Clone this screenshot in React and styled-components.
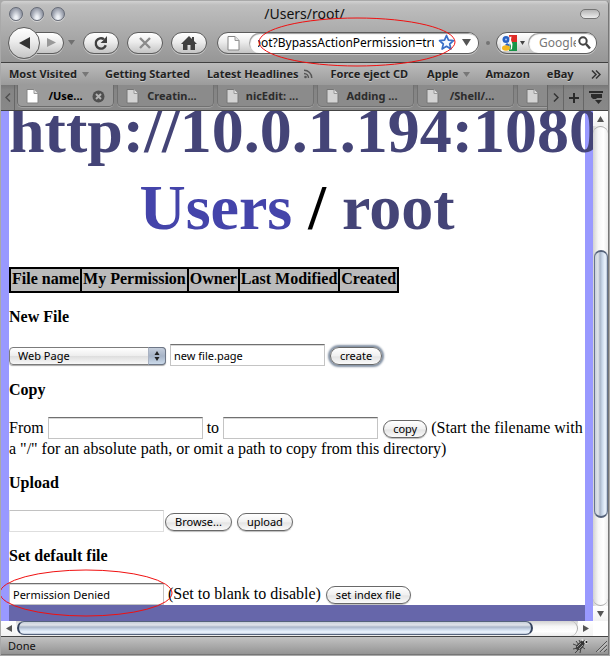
import React from "react";
import styled, { createGlobalStyle, css } from "styled-components";

const sans = `"Noto Sans", "Open Sans", sans-serif`;
const serif = `"Liberation Serif", "Times New Roman", serif`;

const GlobalStyle = createGlobalStyle`
  * { box-sizing: border-box; }
  body { margin: 0; background: #a9a9a9; font-family: ${serif}; }
  button, input, select { font-family: ${sans}; margin: 0; }
`;

const Window = styled.div`
  display: flex;
  flex-direction: column;
  min-height: calc(100vh - 2px);
  margin: 1px 1px 1px 1px;
  overflow: hidden;
  border-radius: 4px 4px 0 0;
  border-right: 1px solid #777;
  background: #b4b4b4;
`;

const Chrome = styled.header`
  background: linear-gradient(#d2d2d2, #bebebe 4px, #969696);
  border-bottom: 1px solid #404040;
`;

const TitleBar = styled.div`
  display: grid;
  grid-template-columns: 1fr auto 1fr;
  align-items: center;
  height: 25px;
  padding: 0 8px;
`;

const Lights = styled.div`
  display: flex;
  gap: 7px;
`;

const Light = styled.button`
  width: 14px;
  height: 14px;
  padding: 0;
  border: 1px solid #656a76;
  border-radius: 50%;
  background: radial-gradient(ellipse at 50% 85%, #eef1f6 15%, #a4a9b5 60%, #747a88);
  box-shadow: 0 1px 0 #d5d5d5;
`;

const Title = styled.h1`
  margin: 0;
  font: 14px/20px ${sans};
  color: #111;
`;

const ToolbarPill = styled.button`
  justify-self: end;
  width: 20px;
  height: 10px;
  padding: 0;
  border: 1px solid #747474;
  border-radius: 5px;
  background: linear-gradient(#b5b5b5, #ededed);
`;

const Toolbar = styled.div`
  display: flex;
  align-items: center;
  height: 36px;
  padding: 0 11px 3px 7px;
`;

const glossy = css`
  border: 1px solid #5c5c5c;
  background: linear-gradient(#fff, #ececec 45%, #c4c4c4);
  box-shadow: 0 1px 0 #c6c6c6;
`;

const BackButton = styled.button`
  ${glossy}
  position: relative;
  z-index: 1;
  flex: none;
  display: grid;
  place-items: center;
  width: 32px;
  height: 32px;
  padding: 0;
  border-radius: 50%;
`;

const ForwardButton = styled.button`
  ${glossy}
  flex: none;
  display: grid;
  place-items: center end;
  width: 30px;
  height: 22px;
  margin-left: -6px;
  padding: 0 7px 0 0;
  border-radius: 0 11px 11px 0;
`;

const PlainButton = styled.button`
  flex: none;
  display: grid;
  place-items: center;
  width: ${(p) => p.$width || 12}px;
  height: 20px;
  padding: 0;
  border: 0;
  background: none;
`;

const NavButton = styled.button`
  ${glossy}
  flex: none;
  display: grid;
  place-items: center;
  width: 36px;
  height: 22px;
  margin-left: 8px;
  padding: 0;
  border-radius: 11px;
`;

const HistoryArrow = styled(PlainButton)`
  margin: 0 -2px 0 1px;
`;

const Pill = styled.div`
  ${glossy}
  position: relative;
  display: flex;
  flex: ${(p) => p.$flex};
  align-items: center;
  min-width: 0;
  height: 22px;
  margin-left: ${(p) => p.$gap}px;
  border-radius: 11px;
`;

const Field = styled.div`
  display: flex;
  flex: 1;
  align-items: center;
  min-width: 0;
  height: 20px;
  padding: 0 4px 0 ${(p) => p.$inset}px;
  border-radius: 10px;
  background: #fff;
  box-shadow: inset 1px 1px 1px #999;
`;

const FieldInput = styled.input`
  flex: 1;
  min-width: 0;
  width: 0;
  height: 18px;
  padding: 0;
  border: 0;
  outline: 0;
  background: none;
  font-size: 12px;
  color: #000;
  text-indent: ${(p) => p.$shift || 0}px;
  &::placeholder { color: #777; opacity: 1; }
`;

const PillIcon = styled.span`
  display: flex;
  align-items: center;
  justify-content: center;
  gap: 3px;
  width: 31px;
`;

const Dot = styled.span`
  width: 4px;
  height: 4px;
  margin-left: 7px;
  border-radius: 50%;
  background: #747474;
`;

const UrlMark = styled.svg`
  position: absolute;
  left: 39px;
  top: -16px;
  width: 200px;
  height: 50px;
  pointer-events: none;
  overflow: visible;
`;

const Bookmarks = styled.nav`
  display: flex;
  align-items: center;
  height: 22px;
  padding: 0 6px 0 8px;
  background: linear-gradient(#bcbcbc, #9b9b9b);
`;

const Bookmark = styled.a`
  display: flex;
  align-items: center;
  gap: 5px;
  margin-right: ${(p) => p.$gap}px;
  font: bold 11px/20px ${sans};
  white-space: nowrap;
  color: #222;
  text-decoration: none;
  text-shadow: 0 1px 0 #c8c8c8;
`;

const More = styled(PlainButton)`
  margin-left: auto;
`;

const TabBar = styled.div`
  display: flex;
  height: 26px;
  background: linear-gradient(#777, #858585 5px, #888);
  border-bottom: 1px solid #444;
`;

const TabStrip = styled.div`
  display: flex;
  flex: 1;
  gap: 3px;
  min-width: 0;
  padding-left: 2px;
  overflow: hidden;
`;

const Tab = styled.button`
  flex: none;
  display: flex;
  align-items: center;
  width: 97px;
  height: 22px;
  padding: 1px 8px 0;
  border: 1px solid ${(p) => (p.$active ? "#6c6c6c" : "#717171")};
  border-top: 0;
  border-radius: 0 0 5px 5px;
  background: ${(p) => (p.$active ? "#9b9b9b" : "#8b8b8b")};
  box-shadow: 0 1px 0 #a2a2a2;
  font: bold 11px/18px ${sans};
  color: ${(p) => (p.$active ? "#000" : "#2c2c2c")};
`;

const TabLabel = styled.span`
  flex: 1;
  text-align: center;
  white-space: nowrap;
`;

const TabTool = styled.button`
  flex: none;
  display: grid;
  place-items: center;
  width: ${(p) => p.$width}px;
  padding: 0;
  border: 0;
  border-left: ${(p) => (p.$line === "left" ? "1px solid #666" : "0")};
  border-right: ${(p) => (p.$line === "right" ? "1px solid #666" : "0")};
  background: none;
`;

const Viewport = styled.div`
  display: grid;
  grid-template-columns: minmax(0, 1fr) 15px;
  grid-template-rows: 1fr 15px;
  flex: 1;
  background: #fff;
`;

const Page = styled.main`
  display: flex;
  flex-direction: column;
  min-width: 0;
  border: solid #99f;
  border-width: 0 8px;
  overflow: clip;
  overflow-clip-margin: border-box;
  background: #fff;
  color: #000;
  font-size: 16px;
  line-height: 19px;
`;

const PathHeading = styled.h2`
  margin: -19px 0 21px;
  font-size: 64px;
  line-height: 77px;
  text-align: center;
`;

const HostLine = styled.span`
  display: block;
  text-align: left;
  white-space: nowrap;
`;

const PathLink = styled.a`
  color: ${(p) => (p.$fresh ? "#44a" : "#447")};
  text-decoration: none;
`;

const Files = styled.table`
  align-self: flex-start;
  border: 1px solid #000;
  border-collapse: collapse;
  background: #bbb;
`;

const Th = styled.th`
  height: 24px;
  padding: 0 1px 2px;
  border: 2px solid #000;
  line-height: 20px;
  white-space: nowrap;
`;

const SectionTitle = styled.h3`
  margin: 15px 0 18px;
  font-size: 16px;
  line-height: 18px;
`;

const Row = styled.form`
  display: block;
  min-height: 22px;
`;

const WrappedRow = styled(Row)`
  padding-bottom: 1px;
`;

const TextInput = styled.input`
  width: 155px;
  height: 22px;
  padding: 0 3px;
  border: 1px solid ${(p) => (p.$faint ? "#dedede" : "#c4c4c4")};
  border-top-color: ${(p) => (p.$faint ? "#c2c2c2" : "#707070")};
  outline: 0;
  border-radius: 0;
  background: #fff;
  box-shadow: ${(p) => (p.$faint ? "none" : "inset 0 1px 0 #d8d8d8")};
  font-size: 11px;
  line-height: 18px;
  color: #000;
`;

const FormButton = styled.button`
  height: 18px;
  margin-left: 1px;
  padding: 0 9px;
  border: 1px solid #686868;
  border-radius: 9px;
  background: linear-gradient(#fff, #f0f0f0 50%, #e4e4e4 55%, #fafafa);
  box-shadow: ${(p) => (p.$focus ? "0 0 2px 2px #8492a4" : "0 1px 1px #bbb")};
  font-size: 11px;
  line-height: 14px;
  color: #000;
`;

const SelectBox = styled.span`
  position: relative;
  display: inline-flex;
  width: 157px;
  height: 18px;
`;

const Select = styled.select`
  appearance: none;
  width: 100%;
  height: 18px;
  padding: 0 22px 0 8px;
  border: 1px solid #7b7b7b;
  border-radius: 4px;
  background: linear-gradient(#fff, #eee 48%, #dedede 52%, #f8f8f8);
  box-shadow: 0 1px 1px #aaa;
  font-size: 11px;
  line-height: 16px;
  color: #000;
`;

const SelectArrows = styled.svg`
  position: absolute;
  top: 0;
  right: 0;
  width: 18px;
  height: 18px;
  border-radius: 0 4px 4px 0;
  border: 1px solid #6d7686;
  border-left-color: #a9b2c2;
  background: linear-gradient(#c5cedc, #a6b3c6 50%, #cbdaea);
  pointer-events: none;
`;

const Marked = styled.span`
  position: relative;
`;

const InputMark = styled.svg`
  position: absolute;
  left: -9px;
  bottom: -15px;
  width: 173px;
  height: 48px;
  pointer-events: none;
`;

const Footer = styled.footer`
  height: 16px;
  margin-top: auto;
  background: #66a;
`;

const VBar = styled.div`
  display: flex;
  flex-direction: column;
  background: linear-gradient(90deg, #d2d2d2, #f6f6f6 35%, #fff 70%, #ececec);
`;

const HBar = styled.div`
  display: flex;
  background: linear-gradient(#d2d2d2, #f6f6f6 35%, #fff 70%, #ececec);
`;

const Arrow = styled.button`
  flex: none;
  display: grid;
  place-items: center;
  width: 15px;
  height: 15px;
  padding: 0;
  border: 0;
  background: linear-gradient(#fff, #f2f2f2);
`;

const VTrack = styled.div`
  flex: 1;
  display: flex;
  flex-direction: column;
  border: solid #aaa;
  border-width: 1px 0;
  border-radius: 8px;
`;

const HTrack = styled.div`
  flex: 1;
  display: flex;
  border-right: 1px solid #aaa;
  border-radius: 8px;
`;

const VThumb = styled.div`
  flex: none;
  width: 14px;
  height: 56%;
  margin: auto auto 87px;
  border: 1px solid #66748c;
  border-top: 2px solid #55627a;
  border-bottom: 2px solid #55627a;
  border-radius: 7px;
  background: linear-gradient(90deg, #c6ced9, #e0e4ea 25%, #a9b5c8 42%, #c8d6e8 60%, #edf5ff 85%, #b8c4d5);
`;

const HThumb = styled.div`
  width: 92%;
  height: 14px;
  margin-left: 1px;
  border: 1px solid #55637c;
  border-left: 2px solid #35435e;
  border-right: 2px solid #35435e;
  border-radius: 7px;
  background: linear-gradient(#c6ced9, #e0e4ea 25%, #a9b5c8 42%, #c8d6e8 60%, #edf5ff 85%, #b8c4d5);
`;

const StatusBar = styled.div`
  display: flex;
  align-items: center;
  height: 19px;
  padding: 0 1px 0 7px;
  border-top: 1px solid #444;
  border-bottom: 1px solid #777;
  background: linear-gradient(#c2c2c2, #949494);
  font: 11px/16px ${sans};
  color: #111;
`;

const StatusText = styled.span`
  flex: 1;
`;

const Triangle = ({ dir = "down", w = 8, h = 6, color = "#666" }) => {
  const points = {
    down: `0,0 ${w},0 ${w / 2},${h}`,
    up: `0,${h} ${w},${h} ${w / 2},0`,
    left: `${w},0 ${w},${h} 0,${h / 2}`,
    right: `0,0 0,${h} ${w},${h / 2}`,
  };
  return (
    <svg width={w} height={h} aria-hidden="true">
      <polygon points={points[dir]} fill={color} />
    </svg>
  );
};

const PageIcon = ({ dim }) => (
  <svg width="13" height="16" viewBox="0 0 13 16" aria-hidden="true">
    <path d="M1 1.500h7l4 4V15H1z" fill={dim ? "#d3d3d3" : "#fff"} stroke={dim ? "#767676" : "#858585"} />
    <path d="M8 1.500v4h4" fill="#e2e2e2" stroke="#999" />
  </svg>
);

const ReloadIcon = () => (
  <svg width="16" height="16" viewBox="0 0 16 16" aria-hidden="true">
    <path d="M12.800 10.300A5.200 5.200 0 1 1 11 4.200" fill="none" stroke="#404040" strokeWidth="2.400" />
    <path d="M14 1v7H7.500l2.600-2.600z" fill="#404040" />
  </svg>
);

const StopIcon = () => (
  <svg width="14" height="14" viewBox="0 0 14 14" aria-hidden="true">
    <path d="M2 2l10 10M12 2L2 12" stroke="#8b8b8b" strokeWidth="2.400" />
  </svg>
);

const HomeIcon = () => (
  <svg width="16" height="14" viewBox="0 0 16 14" aria-hidden="true">
    <path d="M8 0l3 3V1h2v4l3 3h-2v6H9.500V9h-3v5H2V8H0z" fill="#404040" />
  </svg>
);

const StarIcon = () => (
  <svg width="17" height="17" viewBox="0 0 17 17" aria-hidden="true">
    <path d="M8.500 1.500l2 4.700 5 .5-3.800 3.300 1.200 5-4.400-2.700L4.100 15l1.200-5-3.800-3.300 5-.5z" fill="#f4f9ff" stroke="#3a6fc7" strokeWidth="1.700" strokeLinejoin="round" />
  </svg>
);

const GoogleIcon = () => (
  <svg width="16" height="16" viewBox="0 0 16 16" aria-hidden="true">
    <path d="M0 0h16v16H0z" fill="#f5f6f8" />
    <path d="M8 0h8v7H9z" fill="#df2b27" />
    <path d="M9 7h7v9H8z" fill="#189447" />
    <circle cx="5" cy="4.500" r="3.500" fill="#2962c4" />
    <circle cx="5" cy="4.500" r="1" fill="#aac6f5" />
    <path d="M6 8l3 2-2 2-3-2z" fill="#2962c4" />
    <ellipse cx="5" cy="13" rx="4" ry="2.700" fill="#f3b61e" />
    <path d="M8.500 2l2-.5-.5 3.500 1.500 4-.5 5-1.500 1 .5-4-1.500-4z" fill="#fff" />
  </svg>
);

const SearchIcon = () => (
  <svg width="13" height="14" viewBox="0 0 13 14" aria-hidden="true">
    <circle cx="5" cy="5" r="3.700" fill="none" stroke="#444" strokeWidth="2" />
    <path d="M8 8l4 4.500" stroke="#444" strokeWidth="2.500" />
  </svg>
);

const FeedIcon = () => (
  <svg width="9" height="10" viewBox="0 0 9 10" aria-hidden="true">
    <circle cx="1.500" cy="8" r="1.300" fill="#555" />
    <path d="M0 4.500a4.500 4.500 0 0 1 4.500 4.500M0 1.200A7.800 7.800 0 0 1 7.800 9" fill="none" stroke="#555" strokeWidth="1.400" />
  </svg>
);

const ChevronIcon = ({ dir, double }) => (
  <svg width={double ? 10 : 6} height="9" viewBox={double ? "0 0 10 9" : "0 0 6 9"} fill="none" stroke={dir === "left" ? "#505050" : "#333"} strokeWidth="1.500" aria-hidden="true">
    <path d={dir === "left" ? "M5 .5l-4 4 4 4" : "M1 .5l4 4-4 4"} />
    {double && <path d="M5 .5l4 4-4 4" />}
  </svg>
);

const CloseIcon = () => (
  <svg width="13" height="13" viewBox="0 0 13 13" aria-hidden="true">
    <circle cx="6.500" cy="6.500" r="6" fill="#505050" />
    <path d="M4 4l5 5M9 4L4 9" stroke="#b4b4b4" strokeWidth="2" />
  </svg>
);

const PlusIcon = () => (
  <svg width="10" height="10" viewBox="0 0 10 10" aria-hidden="true">
    <path d="M5 0v10M0 5h10" stroke="#2b2b2b" strokeWidth="2" />
  </svg>
);

const TabListIcon = () => (
  <svg width="14" height="13" viewBox="0 0 14 13" aria-hidden="true">
    <path d="M0 1h14" stroke="#2b2b2b" strokeWidth="2" />
    <path d="M2 3h11v4H8l-1 1H4L2 6z" fill="#2b2b2b" />
    <path d="M6 9h7l-3.500 4z" fill="#2b2b2b" />
  </svg>
);

const BugIcon = () => (
  <svg width="17" height="16" viewBox="0 0 17 16" aria-hidden="true">
    <path d="M1 6l5 2M4 3l3 4M1 11l5-1M3 15l4-4M8 15l1-5M13 11l-4-3M7 2l2 4" stroke="#444" fill="none" />
    <ellipse cx="8" cy="8" rx="5" ry="3" transform="rotate(-42 8 8)" fill="#3c3c3c" />
    <path d="M5 9l4-4M7 11l4-4" stroke="#999" />
    <circle cx="11" cy="4" r="2.500" fill="#333" />
    <circle cx="14" cy="4" r="2" fill="#ddd" />
    <circle cx="10.500" cy="2" r="1.300" fill="#ddd" />
    <circle cx="14.500" cy="4" r="1" fill="#111" />
  </svg>
);

const GripIcon = () => (
  <svg width="11" height="12" viewBox="0 0 11 12" aria-hidden="true">
    <path d="M0 12L11 1M4 12l7-7M8 12l3-3" stroke="#555" />
    <path d="M1.500 12L11 2.500M5.500 12L11 6.500" stroke="#ccc" />
  </svg>
);

const bookmarks = [
  { label: "Most Visited", gap: 16, menu: true },
  { label: "Getting Started", gap: 17 },
  { label: "Latest Headlines", gap: 18, feed: true },
  { label: "Force eject CD", gap: 19 },
  { label: "Apple", gap: 15, menu: true },
  { label: "Amazon", gap: 17 },
  { label: "eBay", gap: 0 },
];

const tabs = ["/Use...", "Creatin...", "nicEdit: ...", "Adding ...", "/Shell/...", ""];
const columns = ["File name", "My Permission", "Owner", "Last Modified", "Created"];
const stop = (e) => e.preventDefault();

export default function App() {
  return (
    <>
      <GlobalStyle />
      <Window>
        <Chrome>
          <TitleBar>
            <Lights>
              <Light aria-label="Close window" />
              <Light aria-label="Minimize" />
              <Light aria-label="Zoom" />
            </Lights>
            <Title>/Users/root/</Title>
            <ToolbarPill aria-label="Toggle toolbar" />
          </TitleBar>
          <Toolbar>
            <BackButton aria-label="Back"><Triangle dir="left" w={11} h={12} color="#333" /></BackButton>
            <ForwardButton aria-label="Forward"><Triangle dir="right" w={9} h={9} color="#999" /></ForwardButton>
            <HistoryArrow aria-label="History"><Triangle w={7} h={5} color="#707070" /></HistoryArrow>
            <NavButton aria-label="Reload"><ReloadIcon /></NavButton>
            <NavButton aria-label="Stop"><StopIcon /></NavButton>
            <NavButton aria-label="Home"><HomeIcon /></NavButton>
            <Pill $flex="1" $gap={10}>
              <PillIcon><PageIcon /></PillIcon>
              <Field $inset={9}>
                <FieldInput aria-label="Address" defaultValue="root?BypassActionPermission=true" $shift={-9} />
                <PlainButton $width={24} aria-label="Bookmark this page"><StarIcon /></PlainButton>
                <PlainButton $width={16} aria-label="Show history"><Triangle w={9} h={7} color="#555" /></PlainButton>
              </Field>
              <UrlMark viewBox="0 0 200 50" aria-hidden="true">
                <ellipse cx="100" cy="25" rx="98" ry="24" fill="none" stroke="#f01010" />
              </UrlMark>
            </Pill>
            <Dot />
            <Pill $flex="0 0 101px" $gap={6}>
              <PillIcon><GoogleIcon /><Triangle w={5} h={4} color="#444" /></PillIcon>
              <Field $inset={11}>
                <FieldInput aria-label="Search" placeholder="Google" />
                <PlainButton $width={16} aria-label="Search Google"><SearchIcon /></PlainButton>
              </Field>
            </Pill>
          </Toolbar>
        </Chrome>
        <Bookmarks>
          {bookmarks.map((b) => (
            <Bookmark key={b.label} href="#" $gap={b.gap}>
              {b.label}
              {b.menu && <Triangle w={7} h={5} color="#777" />}
              {b.feed && <FeedIcon />}
            </Bookmark>
          ))}
          <More aria-label="More bookmarks"><ChevronIcon double /></More>
        </Bookmarks>
        <TabBar>
          <TabTool $width={14} $line="right" aria-label="Scroll tabs left"><ChevronIcon dir="left" /></TabTool>
          <TabStrip role="tablist">
            {tabs.map((t, i) => (
              <Tab key={i} role="tab" aria-selected={i === 0} $active={i === 0}>
                <PageIcon dim={i > 0} />
                <TabLabel>{t}</TabLabel>
                {i === 0 && <CloseIcon />}
              </Tab>
            ))}
          </TabStrip>
          <TabTool $width={16} $line="left" aria-label="Scroll tabs right"><ChevronIcon /></TabTool>
          <TabTool $width={20} $line="left" aria-label="New tab"><PlusIcon /></TabTool>
          <TabTool $width={25} $line="left" aria-label="List all tabs"><TabListIcon /></TabTool>
        </TabBar>
        <Viewport>
          <Page>
            <PathHeading>
              <HostLine><PathLink href="#">http://10.0.1.194:1080</PathLink></HostLine>
              <PathLink href="#" $fresh>Users</PathLink> / <PathLink href="#">root</PathLink>
            </PathHeading>
            <Files>
              <thead>
                <tr>{columns.map((c) => <Th key={c} scope="col">{c}</Th>)}</tr>
              </thead>
            </Files>
            <SectionTitle>New File</SectionTitle>
            <Row onSubmit={stop}>
              <SelectBox>
                <Select aria-label="File type"><option>Web Page</option></Select>
                <SelectArrows viewBox="0 0 16 16" aria-hidden="true">
                  <path d="M5.500 7L8 3l2.500 4zM5.500 9L8 13l2.500-4z" fill="#222" />
                </SelectArrows>
              </SelectBox>{" "}
              <TextInput aria-label="New file name" defaultValue="new file.page" />{" "}
              <FormButton $focus>create</FormButton>
            </Row>
            <SectionTitle>Copy</SectionTitle>
            <WrappedRow onSubmit={stop}>
              <label htmlFor="from">From</label> <TextInput id="from" />{" "}
              <label htmlFor="to">to</label> <TextInput id="to" />{" "}
              <FormButton>copy</FormButton> (Start the filename with a "/" for an absolute path, or omit a path to copy from this directory)
            </WrappedRow>
            <SectionTitle>Upload</SectionTitle>
            <Row onSubmit={stop}>
              <TextInput $faint readOnly aria-label="File to upload" />
              <FormButton type="button">Browse...</FormButton>{" "}
              <FormButton>upload</FormButton>
            </Row>
            <SectionTitle>Set default file</SectionTitle>
            <Row onSubmit={stop}>
              <Marked>
                <TextInput aria-label="Default file" defaultValue="Permission Denied" />
                <InputMark viewBox="0 0 173 48" aria-hidden="true">
                  <ellipse cx="86" cy="24" rx="86" ry="23" fill="none" stroke="#f01010" />
                </InputMark>
              </Marked>{" "}
              (Set to blank to disable) <FormButton>set index file</FormButton>
            </Row>
            <Footer />
          </Page>
          <VBar>
            <Arrow aria-label="Scroll up"><Triangle dir="up" w={7} h={6} color="#555" /></Arrow>
            <VTrack><VThumb /></VTrack>
            <Arrow aria-label="Scroll down"><Triangle w={7} h={6} color="#555" /></Arrow>
          </VBar>
          <HBar>
            <Arrow aria-label="Scroll left"><Triangle dir="left" w={6} h={7} color="#555" /></Arrow>
            <HTrack><HThumb /></HTrack>
            <Arrow aria-label="Scroll right"><Triangle dir="right" w={6} h={7} color="#555" /></Arrow>
          </HBar>
        </Viewport>
        <StatusBar>
          <StatusText>Done</StatusText>
          <PlainButton $width={32} aria-label="Debugger"><BugIcon /></PlainButton>
          <GripIcon />
        </StatusBar>
      </Window>
    </>
  );
}
